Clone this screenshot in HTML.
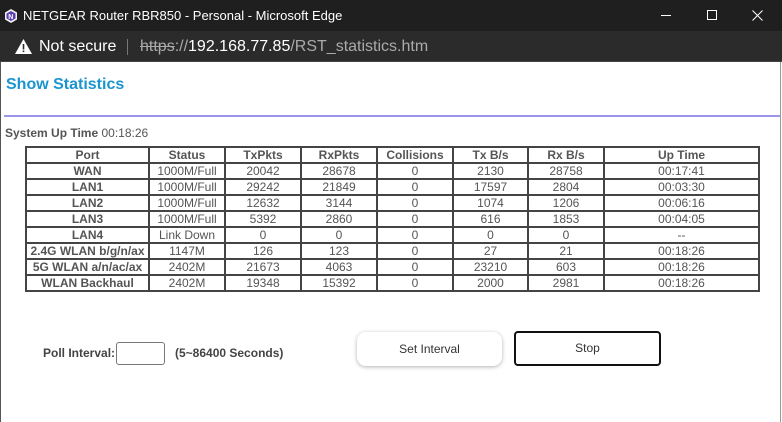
<!DOCTYPE html>
<html><head><meta charset="utf-8"><style>
*{margin:0;padding:0;box-sizing:border-box}
body{width:782px;height:422px;overflow:hidden;background:#fff;font-family:"Liberation Sans",Arial,sans-serif;position:relative}
.tb{position:absolute;left:0;top:0;width:782px;height:31px;background:#1f1f1f;color:#fff;font-size:13px}
.ab{position:absolute;left:0;top:31px;width:782px;height:31px;background:#2b2b2b;border-bottom:1px solid #444;color:#fff;font-size:16px}
.abs{position:absolute}
table{position:absolute;left:25px;top:146px;border-collapse:collapse;border:2px solid #444;font-size:12px;color:#555}
td{border:2px solid #444;height:16px;text-align:center;padding:0;line-height:12px}
tr.h td{font-weight:bold}
td.p{font-weight:bold}
</style></head><body>
<div class="tb">
<svg class="abs" style="left:3px;top:8px" width="16" height="16" viewBox="0 0 16 16"><polygon points="8,1 14,4.5 14,11.5 8,15 2,11.5 2,4.5" fill="#f2f2f2"/><polygon points="8,3 12.5,5.5 12.5,10.5 8,13 3.5,10.5 3.5,5.5" fill="#5a3fb0"/><text x="5.3" y="11" font-size="7" font-weight="bold" fill="#fff" font-family="Liberation Sans">N</text></svg>
<span class="abs" style="left:23px;top:8px">NETGEAR Router RBR850 - Personal - Microsoft Edge</span>
<div class="abs" style="left:661px;top:15px;width:10px;height:1px;background:#fff"></div>
<div class="abs" style="left:707px;top:10px;width:10px;height:10px;border:1px solid #fff"></div>
<svg class="abs" style="left:752px;top:10px" width="11" height="11"><path d="M0.5 0.5L10.5 10.5M10.5 0.5L0.5 10.5" stroke="#fff" stroke-width="1"/></svg>
</div>
<div class="ab">
<svg class="abs" style="left:15px;top:8px" width="17" height="15" viewBox="0 0 17 15"><polygon points="8.5,0 17,15 0,15" fill="#fff"/><rect x="7.7" y="5" width="1.6" height="5.5" fill="#2b2b2b"/><rect x="7.7" y="11.5" width="1.6" height="1.6" fill="#2b2b2b"/></svg>
<span class="abs" style="left:39px;top:7px">Not secure</span>
<div class="abs" style="left:127px;top:8px;width:1px;height:16px;background:#777"></div>
<span class="abs" style="left:140px;top:7px"><span style="color:#aaa;text-decoration:line-through">https</span><span style="color:#aaa">://</span>192.168.77.85<span style="color:#aaa">/RST_statistics.htm</span></span>
</div>
<div class="abs" style="left:0;top:62px;width:1px;height:360px;background:#555"></div>
<div class="abs" style="left:780px;top:62px;width:1px;height:360px;background:#999"></div>
<div class="abs" style="left:6px;top:76px;font-size:16px;font-weight:bold;color:#1a95d0">Show Statistics</div>
<div class="abs" style="left:4px;top:115px;width:776px;height:2px;background:#9d95ea"></div>
<div class="abs" style="left:5px;top:126px;font-size:12px;color:#555"><b>System Up Time</b> 00:18:26</div>
<table>
<colgroup><col style="width:123px"><col style="width:76px"><col style="width:76px"><col style="width:76px"><col style="width:76px"><col style="width:75px"><col style="width:76px"><col style="width:155px"></colgroup>
<tr class="h"><td>Port</td><td>Status</td><td>TxPkts</td><td>RxPkts</td><td>Collisions</td><td>Tx B/s</td><td>Rx B/s</td><td>Up Time</td></tr>
<tr><td class="p">WAN</td><td>1000M/Full</td><td>20042</td><td>28678</td><td>0</td><td>2130</td><td>28758</td><td>00:17:41</td></tr>
<tr><td class="p">LAN1</td><td>1000M/Full</td><td>29242</td><td>21849</td><td>0</td><td>17597</td><td>2804</td><td>00:03:30</td></tr>
<tr><td class="p">LAN2</td><td>1000M/Full</td><td>12632</td><td>3144</td><td>0</td><td>1074</td><td>1206</td><td>00:06:16</td></tr>
<tr><td class="p">LAN3</td><td>1000M/Full</td><td>5392</td><td>2860</td><td>0</td><td>616</td><td>1853</td><td>00:04:05</td></tr>
<tr><td class="p">LAN4</td><td>Link Down</td><td>0</td><td>0</td><td>0</td><td>0</td><td>0</td><td>--</td></tr>
<tr><td class="p">2.4G WLAN b/g/n/ax</td><td>1147M</td><td>126</td><td>123</td><td>0</td><td>27</td><td>21</td><td>00:18:26</td></tr>
<tr><td class="p">5G WLAN a/n/ac/ax</td><td>2402M</td><td>21673</td><td>4063</td><td>0</td><td>23210</td><td>603</td><td>00:18:26</td></tr>
<tr><td class="p">WLAN Backhaul</td><td>2402M</td><td>19348</td><td>15392</td><td>0</td><td>2000</td><td>2981</td><td>00:18:26</td></tr>
</table>
<div class="abs" style="left:43px;top:346px;font-size:12px;font-weight:bold;color:#444">Poll Interval:</div>
<div class="abs" style="left:116px;top:342px;width:49px;height:23px;border:1px solid #777;border-radius:3px"></div>
<div class="abs" style="left:175px;top:346px;font-size:12px;font-weight:bold;color:#444">(5~86400 Seconds)</div>
<div class="abs" style="left:357px;top:332px;width:145px;height:34px;border-radius:9px;box-shadow:0 1px 4px rgba(0,0,0,.3);background:#fff;font-size:12px;color:#333;text-align:center;line-height:34px">Set Interval</div>
<div class="abs" style="left:514px;top:331px;width:147px;height:35px;border:2px solid #111;border-radius:4px;font-size:12px;color:#333;text-align:center;line-height:31px">Stop</div>
</body></html>
